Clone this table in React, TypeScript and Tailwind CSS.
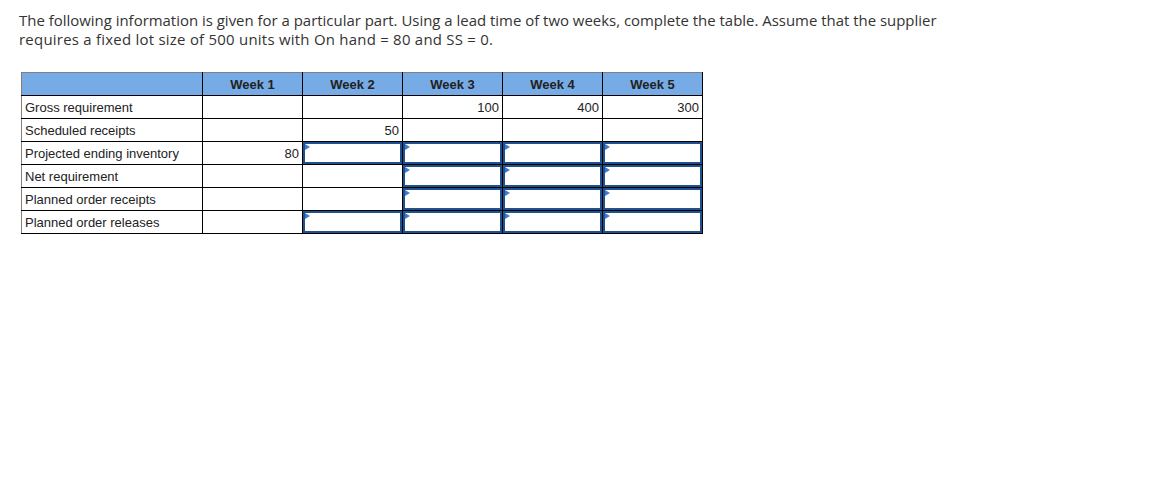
import React from "react";

const rows: { label: string; cells: (string | null)[] }[] = [
  { label: "Gross requirement", cells: ["", "", "100", "400", "300"] },
  { label: "Scheduled receipts", cells: ["", "50", "", "", ""] },
  { label: "Projected ending inventory", cells: ["80", null, null, null, null] },
  { label: "Net requirement", cells: ["", "", null, null, null] },
  { label: "Planned order receipts", cells: ["", "", null, null, null] },
  { label: "Planned order releases", cells: ["", null, null, null, null] },
];

function InputCell() {
  return (
    <td className="p-0 border border-black">
      <div className="relative h-[22px] w-full border-2 border-[#21508f]">
        <span className="absolute left-0 top-0 w-0 h-0 border-t-[3px] border-b-[3px] border-l-[5px] border-t-transparent border-b-transparent border-l-[#3a7bd0]" />
      </div>
    </td>
  );
}

export default function App() {
  return (
    <div className="bg-white w-[1164px] h-[503px] pt-[11px]">
      <p
        className="ml-[19px] text-[14.95px] leading-[19px] text-[#333]"
        style={{ fontFamily: "'Open Sans', Lato, sans-serif" }}
      >
        The following information is given for a particular part. Using a lead time of two weeks, complete the table. Assume that the supplier
        <br />
        <span className="tracking-[0.25px]">requires a fixed lot size of 500 units with On hand = 80 and SS = 0.</span>
      </p>
      <table
        className="ml-[21px] mt-[23px] border-collapse text-[13px] text-[#222] table-fixed"
        style={{ fontFamily: "'Liberation Sans', Arial, sans-serif" }}
      >
        <colgroup>
          <col className="w-[181px]" />
          <col className="w-[100px]" />
          <col className="w-[100px]" />
          <col className="w-[100px]" />
          <col className="w-[100px]" />
          <col className="w-[100px]" />
        </colgroup>
        <thead>
          <tr className="bg-[#77abe6] h-[23px]">
            <th className="border border-black border-l-[#808080] border-t-[#808080] p-0" />
            {[1, 2, 3, 4, 5].map((w) => (
              <th key={w} className="border border-black border-t-[#808080] font-bold text-center p-0 leading-[15px]">
                Week {w}
              </th>
            ))}
          </tr>
        </thead>
        <tbody>
          {rows.map((r) => (
            <tr key={r.label} className="h-[23px]">
              <td className="border border-black border-l-[#808080] px-[3px] py-0 leading-[15px] text-left whitespace-nowrap">
                {r.label}
              </td>
              {r.cells.map((c, i) =>
                c === null ? (
                  <InputCell key={i} />
                ) : (
                  <td key={i} className="border border-black px-[3px] py-0 leading-[15px] text-right">
                    {c}
                  </td>
                )
              )}
            </tr>
          ))}
        </tbody>
      </table>
    </div>
  );
}
